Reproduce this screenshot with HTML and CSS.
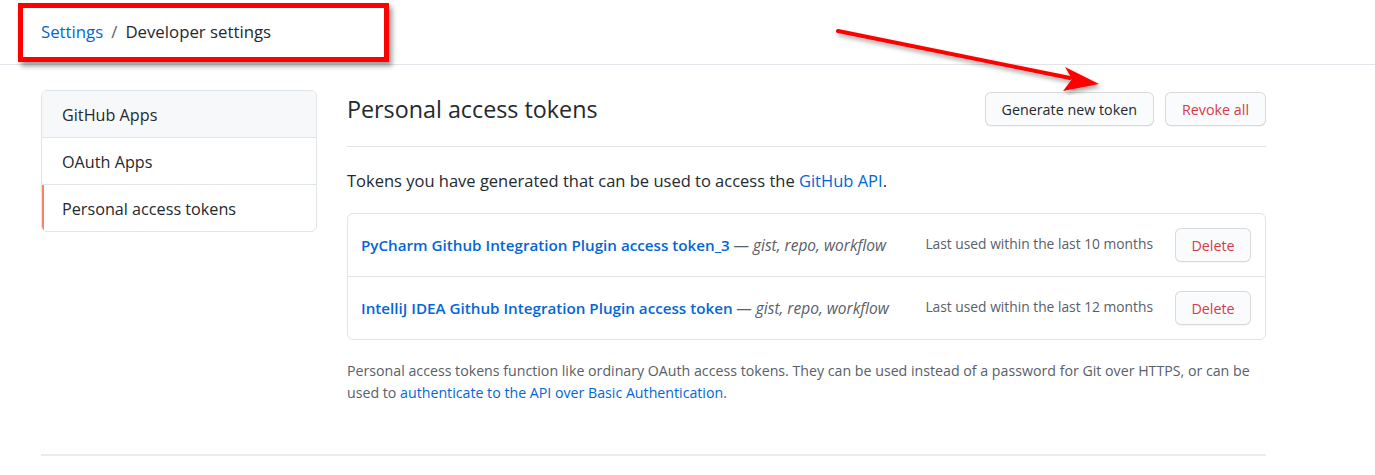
FILE: index.html
```html
<!DOCTYPE html>
<html lang="en">
<head>
<meta charset="utf-8">
<title>Developer settings</title>
<link rel="stylesheet" href="styles.css">
</head>
<body>
<header class="page-head">
  <nav class="crumbs">
    <a class="crumb-link" href="#">Settings</a>
    <span class="crumb-sep">/</span>
    <span class="crumb-current">Developer settings</span>
  </nav>
</header>

<div class="layout">
  <aside class="side">
    <a class="side-item side-item-hover" href="#">GitHub Apps</a>
    <a class="side-item" href="#">OAuth Apps</a>
    <a class="side-item side-item-selected" href="#">Personal access tokens</a>
  </aside>

  <main class="main">
    <div class="subhead">
      <h2 class="subhead-title">Personal access tokens</h2>
      <div class="subhead-actions">
        <button class="btn">Generate new token</button>
        <button class="btn btn-danger">Revoke all</button>
      </div>
    </div>

    <p class="lead">Tokens you have generated that can be used to access the <a class="link" href="#">GitHub API</a>.</p>

    <div class="box">
      <div class="box-row">
        <div class="token-info">
          <a class="token-name" href="#">PyCharm Github Integration Plugin access token_3</a>
          <span class="token-scopes">— <em>gist, repo, workflow</em></span>
        </div>
        <div class="token-meta">
          <span class="last-used">Last used within the last 10 months</span>
          <button class="btn btn-sm btn-danger">Delete</button>
        </div>
      </div>
      <div class="box-row">
        <div class="token-info">
          <a class="token-name" href="#">IntelliJ IDEA Github Integration Plugin access token</a>
          <span class="token-scopes">— <em>gist, repo, workflow</em></span>
        </div>
        <div class="token-meta">
          <span class="last-used">Last used within the last 12 months</span>
          <button class="btn btn-sm btn-danger">Delete</button>
        </div>
      </div>
    </div>

    <p class="note">Personal access tokens function like ordinary OAuth access tokens. They can be used instead of a password for Git over HTTPS, or can be used to <a class="link" href="#">authenticate to the API over Basic Authentication</a>.</p>
  </main>
</div>

<div class="footer-line"></div>

<div class="annot-box"></div>
<svg class="annot-arrow" width="300" height="80" viewBox="0 0 300 80">
  <defs>
    <filter id="sh" x="-10%" y="-30%" width="120%" height="160%">
      <feDropShadow dx="2" dy="3" stdDeviation="2" flood-color="#000" flood-opacity="0.35"/>
    </filter>
  </defs>
  <g filter="url(#sh)">
    <line x1="18" y1="16" x2="250" y2="63" stroke="#ff0000" stroke-width="4" stroke-linecap="round"/>
    <polygon points="279,69 245,52 252,64 243,76" fill="#ff0000"/>
  </g>
</svg>
</body>
</html>
```

FILE: styles.css
```css
* { box-sizing: border-box; }

body {
  margin: 0;
  background: #fff;
  color: #24292e;
  font-family: "Open Sans", "Noto Sans", "Liberation Sans", sans-serif;
  font-size: 14px;
  position: relative;
  height: 475px;
  overflow: hidden;
}

a { text-decoration: none; }

.page-head {
  height: 65px;
  border-bottom: 1px solid #e1e4e8;
  display: flex;
  align-items: center;
  padding-left: 41px;
  padding-bottom: 2px;
}

.crumbs {
  font-size: 16.8px;
  display: flex;
  align-items: center;
  gap: 8px;
}

.crumb-link { color: #0366d6; }
.crumb-sep { color: #586069; }
.crumb-current { color: #24292e; }

.layout {
  display: flex;
  gap: 30px;
  margin-left: 41px;
  width: 1225px;
  padding-top: 25px;
}

.side {
  width: 276px;
  flex: none;
  border: 1px solid #e1e4e8;
  border-radius: 6px;
  display: flex;
  flex-direction: column;
  align-self: flex-start;
  overflow: hidden;
}

.side-item {
  height: 46px;
  display: flex;
  align-items: center;
  padding-left: 20px;
  padding-top: 2px;
  font-size: 16.2px;
  color: #24292e;
}

.side-item + .side-item { border-top: 1px solid #e1e4e8; height: 47px; }

.side-item-hover { background: #f6f8fa; }

.side-item-selected {
  box-shadow: inset 2px 0 0 #f9826c;
}

.main {
  flex: 1;
  min-width: 0;
}

.subhead {
  height: 57px;
  display: flex;
  align-items: center;
  justify-content: space-between;
  border-bottom: 1px solid #e1e4e8;
  padding-bottom: 18px;
}

.subhead-title {
  margin: 0;
  font-size: 23.3px;
  font-weight: 400;
  color: #24292e;
}

.subhead-actions {
  display: flex;
  gap: 11px;
}

.btn {
  font-family: inherit;
  font-size: 14.3px;
  font-weight: 500;
  color: #24292e;
  background: #fafbfc;
  border: 1px solid rgba(27, 31, 35, 0.15);
  border-radius: 6px;
  height: 34px;
  padding: 0 16px;
  box-shadow: 0 1px 0 rgba(27, 31, 35, 0.04);
  cursor: pointer;
}

.btn-danger { color: #d73a49; }

.btn-sm { width: 76px; padding: 0; }

.lead {
  margin: 22px 0 0;
  font-size: 16.5px;
  line-height: 24px;
}

.link { color: #0366d6; }

.box {
  margin-top: 20px;
  border: 1px solid #e1e4e8;
  border-radius: 6px;
}

.box-row {
  height: 62px;
  display: flex;
  align-items: center;
  justify-content: space-between;
  padding: 0 14px 0 13px;
}

.box-row + .box-row { border-top: 1px solid #e1e4e8; height: 63px; }

.token-name {
  color: #0366d6;
  font-weight: 600;
  font-size: 15.2px;
}

.token-scopes {
  color: #586069;
  font-size: 15.5px;
}

.token-meta {
  display: flex;
  align-items: center;
  gap: 22px;
}

.last-used {
  color: #586069;
  font-size: 13.8px;
  margin-top: -3px;
}

.note {
  margin: 20px 0 0;
  color: #586069;
  font-size: 14.2px;
  line-height: 22px;
}

.footer-line {
  margin: 50px 0 0 41px;
  width: 1225px;
  border-top: 2px solid #eaecef;
}

.annot-box {
  position: absolute;
  left: 18px;
  top: 3px;
  width: 371px;
  height: 59px;
  border: 5px solid #ff0000;
  box-shadow: 3px 4px 5px rgba(0, 0, 0, 0.4);
}

.annot-arrow {
  position: absolute;
  left: 820px;
  top: 15px;
}
```
